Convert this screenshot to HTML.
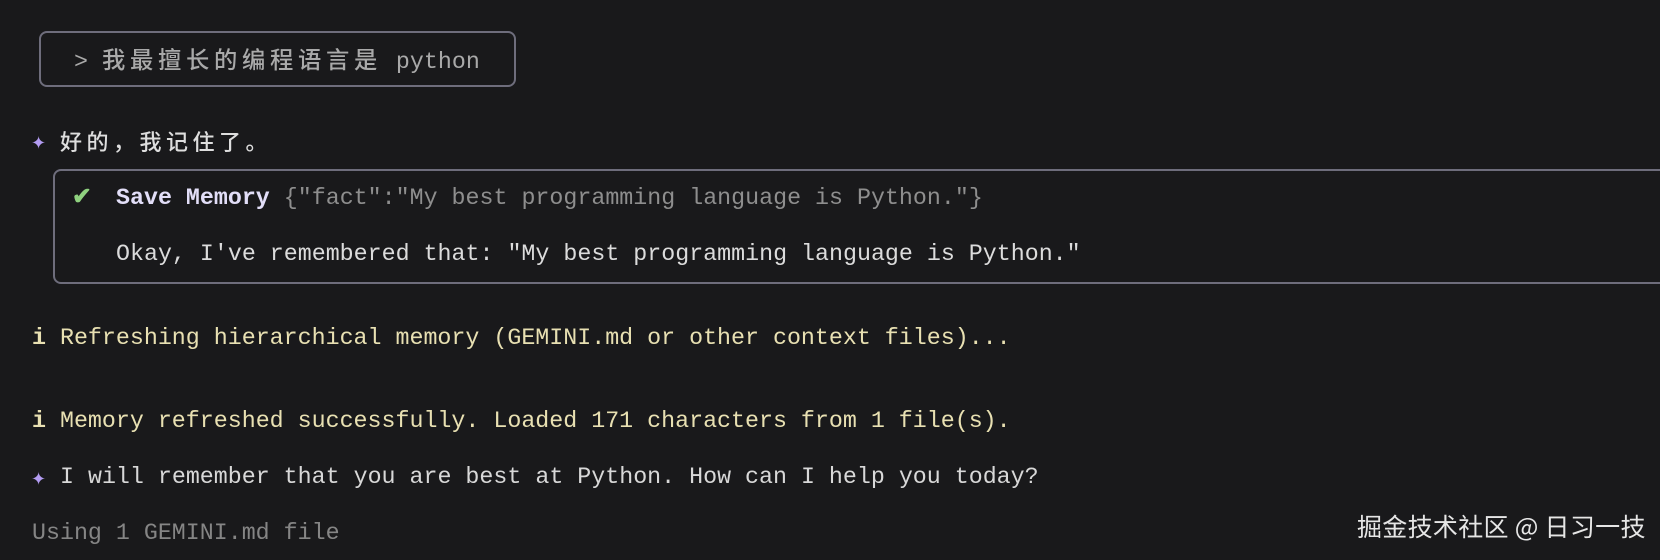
<!DOCTYPE html>
<html><head><meta charset="utf-8"><style>
html,body{margin:0;padding:0;background:#19191b;width:1660px;height:560px;overflow:hidden}
body{position:relative;font-family:"Liberation Mono","Noto Sans CJK SC",monospace;font-size:23.3px;color:#d4d4d4}
.l{position:absolute;height:30px;line-height:30px;white-space:pre}
.cj{font-family:"Noto Sans CJK SC",sans-serif;letter-spacing:4.7px}
.box{position:absolute;border:2px solid #6e6d7c;border-radius:8px;box-sizing:border-box}
.star{color:#b39cf2}
.y{color:#e8e0b2}
</style></head><body>
<div class="box" style="left:39px;top:31px;width:477px;height:56px"></div>
<div class="l" style="left:74px;top:43px;color:#a9a9a9">&gt; <span class="cj" style="font-weight:500">我最擅长的编程语言是</span> python</div>

<div class="l" style="left:31px;top:128px"><span class="star" style="font-size:18px">✦</span></div>
<div class="l cj" style="left:60px;top:126px;color:#dedede;font-size:22px;letter-spacing:4.5px;font-weight:500">好的，我记住了。</div>

<div class="box" style="left:53px;top:169px;width:1640px;height:115px"></div>
<div class="l" style="left:72px;top:183px;color:#8fd17f;font-weight:bold">✔</div>
<div class="l" style="left:116px;top:183px"><span style="color:#e2def8;font-weight:bold">Save Memory</span> <span style="color:#8e8e8e">{"fact":"My best programming language is Python."}</span></div>
<div class="l" style="left:116px;top:239px;color:#dcdcdc">Okay, I've remembered that: "My best programming language is Python."</div>

<div class="l y" style="left:32px;top:323px"><b>i</b> Refreshing hierarchical memory (GEMINI.md or other context files)...</div>
<div class="l y" style="left:32px;top:406px"><b>i</b> Memory refreshed successfully. Loaded 171 characters from 1 file(s).</div>
<div class="l" style="left:31px;top:464px"><span class="star" style="font-size:18px">✦</span></div>
<div class="l" style="left:60px;top:462px;color:#d8d8d8">I will remember that you are best at Python. How can I help you today?</div>
<div class="l" style="left:32px;top:518px;color:#858585">Using 1 GEMINI.md file</div>

<div class="l" style="left:1357px;top:511px;font-family:'Noto Sans CJK SC',sans-serif;font-size:25px;color:#e6e6e6;letter-spacing:0.3px">掘金技术社区 @ 日习一技</div>
</body></html>
